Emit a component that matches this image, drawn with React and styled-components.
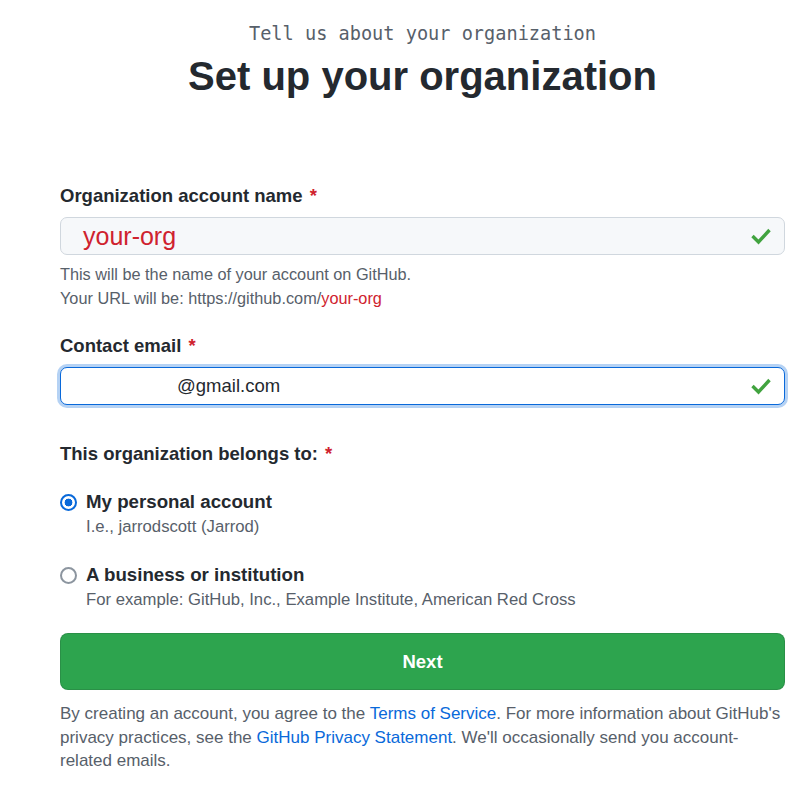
import React from 'react'
import styled, { createGlobalStyle } from 'styled-components'

const GlobalStyle = createGlobalStyle`
	body {
		margin: 0;
		background: #fff;
		font-family: "Liberation Sans", Arial, sans-serif;
		color: #24292f;
	}
`

const CheckIcon = () => (
	<svg width="22" height="18" viewBox="0 0 22 18" aria-hidden="true">
		<polyline points="2.5,9 8.5,15 19.5,3" fill="none" stroke="#41a33f" strokeWidth="3.4" strokeLinejoin="miter" />
	</svg>
)

export default function App() {
	return (
		<>
			<GlobalStyle />
			<Page>
				<Header>
					<Eyebrow>Tell us about your organization</Eyebrow>
					<Title>Set up your organization</Title>
				</Header>

				<Label>Organization account name <Required>*</Required></Label>
				<Field $muted $indent={22}>
					<FieldText $accent $size={25}>your-org</FieldText>
					<CheckIcon />
				</Field>
				<Hint>
					This will be the name of your account on GitHub.<br />
					Your URL will be: https://github.com/<Accent>your-org</Accent>
				</Hint>

				<Label $top={24}>Contact email <Required>*</Required></Label>
				<Field $focused $indent={116}>
					<FieldText $size={18.5}>@gmail.com</FieldText>
					<CheckIcon />
				</Field>

				<Label $top={37}>This organization belongs to: <Required>*</Required></Label>

				<Options>
					<Option>
						<Radio $checked />
						<OptionBody>
							<OptionTitle>My personal account</OptionTitle>
							<OptionNote>I.e., jarrodscott (Jarrod)</OptionNote>
						</OptionBody>
					</Option>
					<Option>
						<Radio />
						<OptionBody>
							<OptionTitle>A business or institution</OptionTitle>
							<OptionNote>For example: GitHub, Inc., Example Institute, American Red Cross</OptionNote>
						</OptionBody>
					</Option>
				</Options>

				<NextButton type="button">Next</NextButton>

				<Legal>
					By creating an account, you agree to the <Link>Terms of Service</Link>. For more information about GitHub's privacy practices, see the <Link>GitHub Privacy Statement</Link>. We'll occasionally send you account-related emails.
				</Legal>
			</Page>
		</>
	)
}


// * styled components
const Page = styled.main`
	display: flex;
	flex-direction: column;
	width: 725px;
	padding: 22px 0 30px 60px;
`
const Header = styled.header`
	display: flex;
	flex-direction: column;
	align-items: center;
	gap: 6px;
	margin-bottom: 84px;
`
const Eyebrow = styled.div`
	font-family: "DejaVu Sans Mono", "Liberation Mono", monospace;
	font-size: 18.6px;
	line-height: 24px;
	color: #57606a;
`
const Title = styled.h1`
	margin: 0;
	font-size: 40px;
	line-height: 48px;
	font-weight: 700;
	color: #24292f;
`
const Label = styled.div`
	margin-top: ${p => p.$top || 0}px;
	font-size: 18.5px;
	line-height: 24px;
	font-weight: 700;
	color: #24292f;
`
const Required = styled.span`
	color: #cf222e;
	margin-left: 2px;
`
const Field = styled.div`
	display: flex;
	align-items: center;
	justify-content: space-between;
	box-sizing: border-box;
	height: 38px;
	margin-top: 9px;
	padding: 0 12px 0 ${p => p.$indent}px;
	border-radius: 7px;
	border: ${p => p.$focused ? '1.5px solid #0969da' : '1px solid #d0d7de'};
	background: ${p => p.$muted ? '#f6f8fa' : '#fff'};
	box-shadow: ${p => p.$focused ? '0 0 0 3px rgba(9, 105, 218, 0.3)' : 'none'};
`
const FieldText = styled.span`
	font-size: ${p => p.$size}px;
	color: ${p => p.$accent ? '#cf222e' : '#24292f'};
`
const Hint = styled.p`
	margin: 7px 0 0;
	font-size: 16.3px;
	line-height: 24px;
	color: #57606a;
`
const Accent = styled.span`
	color: #cf222e;
`
const Options = styled.div`
	display: flex;
	flex-direction: column;
	gap: 24px;
	margin-top: 24px;
`
const Option = styled.label`
	display: flex;
	align-items: flex-start;
	gap: 9px;
`
const Radio = styled.span`
	flex: none;
	box-sizing: border-box;
	width: 17px;
	height: 17px;
	margin-top: 3.5px;
	border-radius: 50%;
	border: ${p => p.$checked ? '2.5px solid #0969da' : '2px solid #8c959f'};
	background: ${p => p.$checked ? 'radial-gradient(circle, #0969da 0 3.6px, #fff 4.2px)' : '#fff'};
`
const OptionBody = styled.div`
	display: flex;
	flex-direction: column;
`
const OptionTitle = styled.span`
	font-size: 18.7px;
	line-height: 24px;
	font-weight: 700;
	color: #24292f;
`
const OptionNote = styled.span`
	font-size: 16.7px;
	line-height: 25px;
	color: #57606a;
`
const NextButton = styled.button`
	margin-top: 21px;
	height: 57px;
	border: 1px solid rgba(27, 31, 36, 0.15);
	border-radius: 8px;
	background: #2da44e;
	color: #fff;
	font-family: inherit;
	font-size: 18.5px;
	font-weight: 700;
	cursor: pointer;
`
const Legal = styled.p`
	margin: 12px 0 0;
	font-size: 17px;
	line-height: 23.5px;
	color: #57606a;
`
const Link = styled.a`
	color: #0969da;
	text-decoration: none;
`
